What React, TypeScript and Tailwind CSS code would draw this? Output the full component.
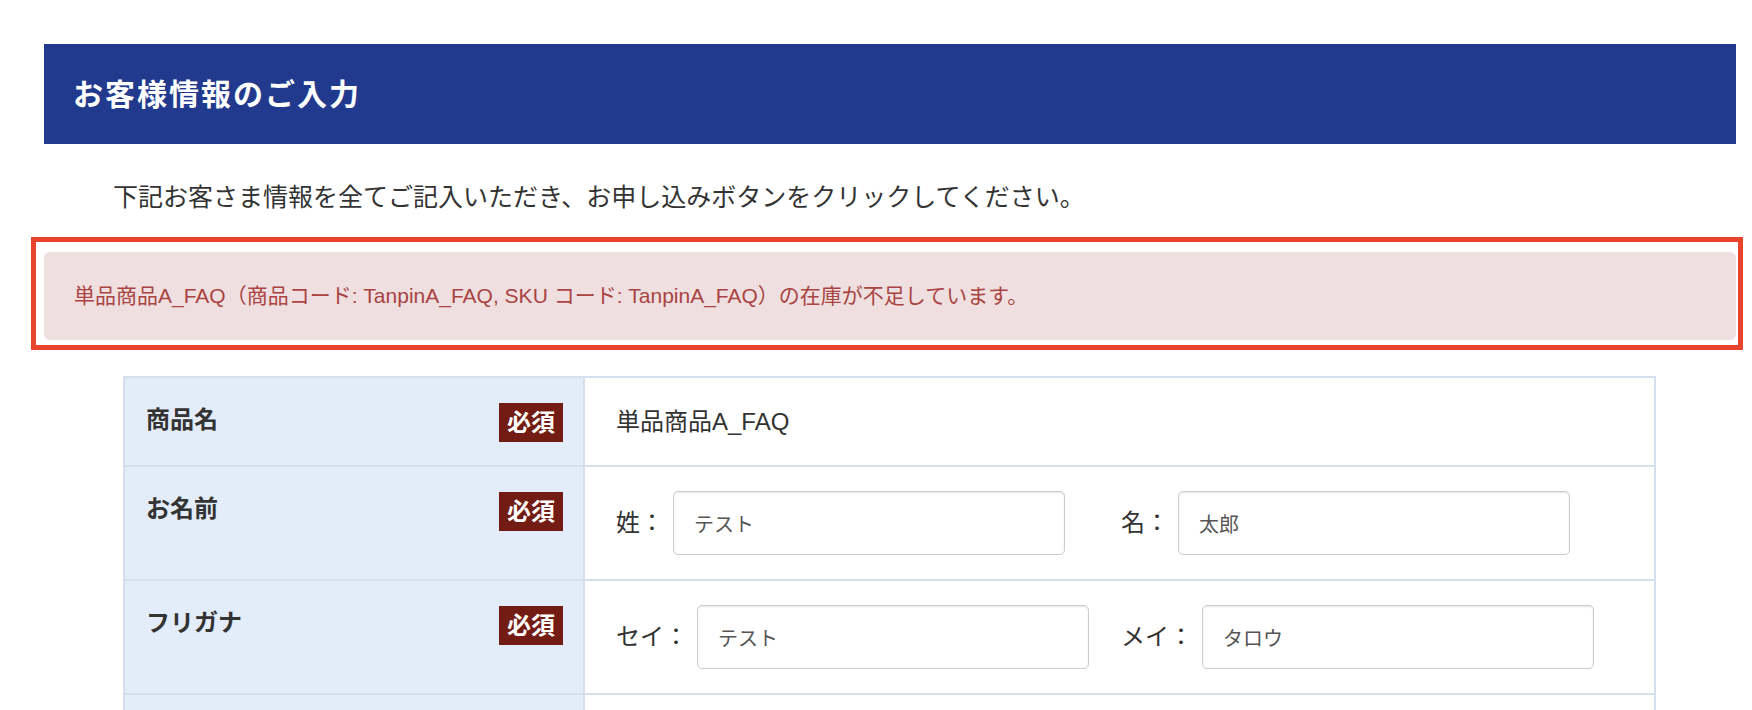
import React from "react";

const fields = [
  { label: "姓：", value: "テスト" },
  { label: "名：", value: "太郎" },
];

const kana = [
  { label: "セイ：", value: "テスト" },
  { label: "メイ：", value: "タロウ" },
];

function Badge() {
  return (
    <span className="inline-block h-[39px] bg-[#731c14] px-[8px] text-[24px] font-bold leading-[39px] text-white">
      必須
    </span>
  );
}

function LabelCell({ children }: { children?: React.ReactNode }) {
  return (
    <div className="flex w-[460px] shrink-0 items-start justify-between border-r-2 border-[#d5dfed] bg-[#e3ecf9] pl-[21px] pr-[20px] pt-[25px]">
      <span className="-mt-[3px] text-[24px] font-bold leading-[39px] text-[#333]">{children}</span>
      {children ? <Badge /> : null}
    </div>
  );
}

function InputGroup({ label, value }: { label: string; value: string }) {
  return (
    <div className="flex w-[505px] items-center">
      <span className="mr-[9px] text-[24px] text-[#333]">{label}</span>
      <input
        readOnly
        defaultValue={value}
        className="h-[64px] w-[392px] rounded-[5px] border border-[#cccccc] bg-white pl-[20px] pr-[21px] text-[20px] text-[#555] shadow-[inset_0_1px_2px_rgba(0,0,0,0.1)] outline-none"
      />
    </div>
  );
}

/**
 * Customer information entry form with an out-of-stock alert.
 */
export default function App() {
  return (
    <div className="relative h-[710px] overflow-hidden bg-white font-['Liberation_Sans','Noto_Sans_CJK_JP',sans-serif] text-[#333]">
      <div className="pl-[44px] pr-[16px] pt-[44px]">
        <h2 className="flex h-[100px] items-center bg-[#223a8e] pl-[29px] text-[30px] font-bold tracking-[2px] text-white">
          お客様情報のご入力
        </h2>

        <p className="mt-[35px] pl-[69px] text-[25px] leading-[36px]">
          下記お客さま情報を全てご記入いただき、お申し込みボタンをクリックしてください。
        </p>

        <div className="mt-[37px] flex h-[88px] items-center rounded-[6px] bg-[#efdfe0] pl-[30px] text-[21px] text-[#a94442]">
          単品商品A_FAQ（商品コード: TanpinA_FAQ, SKU コード: TanpinA_FAQ）の在庫が不足しています。
        </div>

        <div className="ml-[79px] mt-[36px] w-[1533px] border-2 border-[#d5dfed]">
          <div className="flex h-[87px]">
            <LabelCell>商品名</LabelCell>
            <div className="flex items-center pl-[31px] text-[24px]">単品商品A_FAQ</div>
          </div>
          <div className="flex h-[114px] border-t-2 border-[#d5dfed]">
            <LabelCell>お名前</LabelCell>
            <div className="flex items-center pl-[31px]">
              {fields.map((f) => (
                <InputGroup key={f.label} label={f.label} value={f.value} />
              ))}
            </div>
          </div>
          <div className="flex h-[114px] border-t-2 border-[#d5dfed]">
            <LabelCell>フリガナ</LabelCell>
            <div className="flex items-center pl-[31px]">
              {kana.map((f) => (
                <InputGroup key={f.label} label={f.label} value={f.value} />
              ))}
            </div>
          </div>
          <div className="flex h-[114px] border-t-2 border-[#d5dfed]">
            <LabelCell />
            <div />
          </div>
        </div>
      </div>

      <div className="pointer-events-none absolute left-[31px] top-[237px] h-[113px] w-[1712px] border-[5px] border-[#e8432b]" />
    </div>
  );
}
